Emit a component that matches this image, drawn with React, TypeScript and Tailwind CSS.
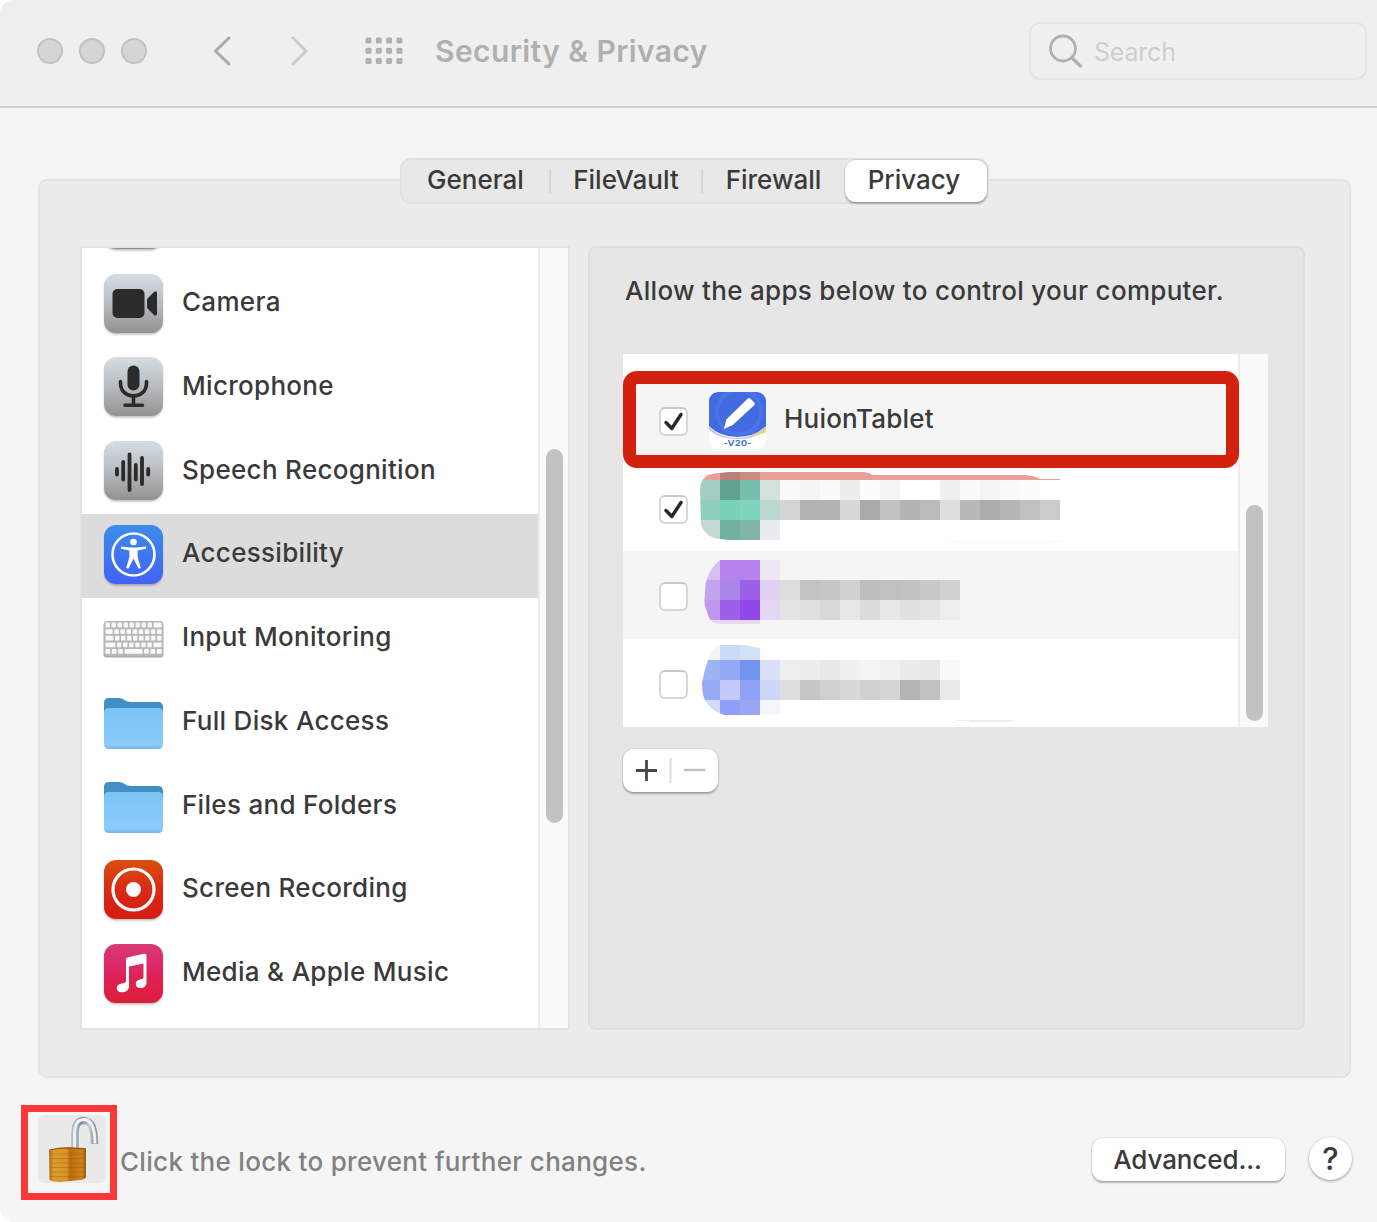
import type { ReactNode } from 'react'

function Tile({ id, from, mid, to, children }: { id: string; from: string; mid?: string; to: string; children?: ReactNode }) {
  return (
    <svg width="67" height="69" viewBox="-4 -4 67 69" className="-m-1 shrink-0">
      <defs>
        <linearGradient id={id} x1="0" y1="0" x2="0" y2="1">
          <stop offset="0" stopColor={from} />
          {mid && <stop offset="0.5" stopColor={mid} />}
          <stop offset="1" stopColor={to} />
        </linearGradient>
      </defs>
      <rect x="-1" y="1" width="61" height="61" rx="13" fill="#000" opacity="0.06" />
      <rect x="0" y="1" width="59" height="59.5" rx="12.5" fill="#000" opacity="0.16" />
      <rect width="59" height="59" rx="12" fill={`url(#${id})`} />
      {children}
    </svg>
  )
}

function GrayTile({ id, children }: { id: string; children?: ReactNode }) {
  return <Tile id={id} from="#d3dee4" mid="#b8bcbf" to="#929292">{children}</Tile>
}

function CameraIcon() {
  return (
    <GrayTile id="camera">
      <rect x="8.5" y="15" width="32" height="29" rx="5" fill="#2b2b2b" />
      <path d="M43 26 Q43 25 44 24 L50 18 Q53 16 53 19.5 V39.5 Q53 42.5 50 41 L44 35 Q43 34 43 33 Z" fill="#2b2b2b" />
    </GrayTile>
  )
}

function MicIcon() {
  return (
    <GrayTile id="mic">
      <rect x="23.5" y="8.5" width="12" height="25" rx="6" fill="#2b2b2b" />
      <path d="M16.5 24.5 V26 C16.5 34 22 38.8 29.5 38.8 C37 38.8 42.5 34 42.5 26 V24.5 M29.5 39 V48 M21 48.3 H38.5" fill="none" stroke="#2b2b2b" strokeWidth="3.6" strokeLinecap="round" />
    </GrayTile>
  )
}

function SpeechIcon() {
  return (
    <GrayTile id="speech">
      <path d="M13 28 V33.5 M19.2 21 V38.5 M25.5 13.5 V49 M31.8 24 V38.5 M38 17 V43 M44.2 28 V33.5" stroke="#2b2b2b" strokeWidth="3.8" strokeLinecap="round" />
    </GrayTile>
  )
}

function AccessibilityIcon() {
  return (
    <Tile id="access" from="#3d8ceb" mid="#3d78f0" to="#4362f4">
      <circle cx="29.5" cy="29.5" r="21" fill="none" stroke="#fff" strokeWidth="2.6" />
      <circle cx="29.5" cy="17" r="3.3" fill="#fff" />
      <path d="M17 21.6 L26.5 22.6 H32.5 L42 21.6 V23.8 L33.6 25.6 V32 L36.8 43 L34.6 43.8 L29.5 33.5 L24.4 43.8 L22.2 43 L25.4 32 V25.6 L17 23.8 Z" fill="#fff" />
    </Tile>
  )
}

const keyRows = [
  [5, 5, 5, 5, 5, 5, 5, 5, 9],
  [8, 5, 5, 5, 5, 5, 5, 5, 5],
  [9, 5, 5, 5, 5, 5, 5, 5, 5],
  [11, 5, 5, 5, 5, 5, 5, 9],
  [5, 5, 5, 19, 5, 5, 5],
]

function KeyboardIcon() {
  return (
    <svg width="61" height="61" viewBox="-1 0 61 61" className="-mx-px shrink-0">
      <rect x="-0.5" y="13" width="60" height="35.5" rx="3" fill="#ababab" />
      <rect x="0" y="12" width="59" height="35" rx="2.5" fill="#b8b8b8" />
      {keyRows.map((keys, r) => {
        const scale = (56 - (keys.length - 1) * 1.6) / keys.reduce((a, b) => a + b, 0)
        let x = 1.5
        return keys.map((k, c) => {
          const left = x
          x += k * scale + 1.6
          return <rect key={`${r}-${c}`} x={left} y={13.6 + r * 6.6} width={k * scale} height="4.8" rx="0.9" fill="#f8f8f8" />
        })
      })}
    </svg>
  )
}

function FolderIcon({ id }: { id: string }) {
  return (
    <svg width="61" height="61" viewBox="-1 0 61 61" className="-mx-px shrink-0">
      <defs>
        <linearGradient id={id} x1="0" y1="0" x2="0" y2="1">
          <stop offset="0" stopColor="#7cc4f4" />
          <stop offset="0.9" stopColor="#8accfc" />
          <stop offset="1" stopColor="#74b4de" />
        </linearGradient>
      </defs>
      <path d="M0 11 Q0 6 5 6 H15 Q18 6 20.5 8 Q23 10 27 10 H54 Q59 10 59 15 V30 H0 Z" fill="#418fc6" />
      <path d="M0 21 Q0 16 5 16 H54 Q59 16 59 21 V52 Q59 57 54 57 H5 Q0 57 0 52 Z" fill={`url(#${id})`} />
    </svg>
  )
}

function RecordingIcon() {
  return (
    <Tile id="record" from="#d9500f" mid="#d92a14" to="#d61c12">
      <circle cx="29.5" cy="29.5" r="20.5" fill="none" stroke="#fff" strokeWidth="3.2" />
      <circle cx="29.5" cy="29.5" r="7.5" fill="#fff" />
    </Tile>
  )
}

function MusicIcon() {
  return (
    <Tile id="music" from="#d63a78" mid="#df235c" to="#dc1c36">
      <path d="M22 15.5 Q22 13.7 24 13.2 L40 9.8 Q42.5 9.4 42.5 11.5 V38 C42.5 42 40 44 36.5 44 C33.5 44 31.8 42.4 31.8 40 C31.8 37 34 35.6 37 35.2 C39 34.9 39.5 34.5 39.5 32.5 V19.5 L25 22.5 V42 C25 46 22 48.3 18 48.3 C15 48.3 12.7 46.8 12.7 44 C12.7 41.2 15 39.8 18 39.4 C21 39 22 38.7 22 36.5 Z" fill="#fff" />
    </Tile>
  )
}

const sections = [
  { label: 'Camera', icon: <CameraIcon /> },
  { label: 'Microphone', icon: <MicIcon /> },
  { label: 'Speech Recognition', icon: <SpeechIcon /> },
  { label: 'Accessibility', icon: <AccessibilityIcon />, selected: true },
  { label: 'Input Monitoring', icon: <KeyboardIcon /> },
  { label: 'Full Disk Access', icon: <FolderIcon id="folder-disk" /> },
  { label: 'Files and Folders', icon: <FolderIcon id="folder-files" /> },
  { label: 'Screen Recording', icon: <RecordingIcon /> },
  { label: 'Media & Apple Music', icon: <MusicIcon /> },
]

type Band = { y: number; h: number; colors: string[] }

const hiddenApps: { checked: boolean; height: string; clip: string; bands: Band[]; extra?: ReactNode }[] = [
  {
    checked: true,
    height: 'h-[87px]',
    clip: 'M0 24 Q1 9 20 9 Q30 7 60 8 H164 Q170 9 172 11 H326 Q336 12 340 15 H360 V76 H60 Q40 78 20 75 Q6 74 1 61 Z',
    bands: [
      { y: 8, h: 8, colors: ['#e8a19a', '#b97f78', '#cb8a82', ...Array(15).fill('#e8a19a')] },
      { y: 16, h: 20, colors: ['#a5ccc1', '#60a291', '#75c0ab', '#d5e2de', '#fafafa', '#f5f5f5', '#fafafa', '#ededed', '#fcfcfc', '#f4f4f4', '#fefefe', '#fefefe', '#f0f0f0', '#fafafa', '#f3f3f3', '#fafafa', '#fcfcfc', '#fefefe'] },
      { y: 36, h: 20, colors: ['#90cfbc', '#7ad1b9', '#80d5be', '#bbd7cf', '#d5d5d5', '#b2b2b2', '#b3b3b3', '#d8d8d8', '#aaaaaa', '#c1c1c1', '#b4b4b4', '#bbbbbb', '#dedede', '#b9b9b9', '#acacac', '#b5b5b5', '#c0c0c0', '#cbcbcb'] },
      { y: 56, h: 20, colors: ['#c4d9d4', '#6fb09f', '#82b5a8', '#e9edef'] },
    ],
    extra: <path d="M241 76 H369 Q360 80 340 80 H270 Q250 80 241 76 Z" fill="#fcfcfc" />,
  },
  {
    checked: false,
    height: 'h-[88px]',
    clip: 'M20 9 H380 V69 H80 V73 H20 Q9 73 7 60 Q3 53 5 44 Q4 22 20 9 Z',
    bands: [
      { y: 9, h: 20, colors: ['#d6bff0', '#b583ee', '#b583ee', '#ede8f5'] },
      { y: 29, h: 20, colors: ['#c3a4ef', '#ab86e9', '#9d60e8', '#e0d0f2', '#dddddd', '#c3c3c3', '#c6c6c6', '#d1d1d1', '#bdbdbd', '#c0c0c0', '#c2c2c2', '#c8c8c8', '#d1d1d1'] },
      { y: 49, h: 20, colors: ['#bd98ed', '#9d60e8', '#9248e9', '#e2d8f3', '#e4e4e4', '#e0e0e0', '#d9d9d9', '#e8e8e8', '#dcdcdc', '#e8e8e8', '#e1e1e1', '#e4e4e4', '#eeeeee'] },
      { y: 69, h: 4, colors: ['#ead8f6', '#e4d8f2', '#e4d8f2'] },
    ],
  },
  {
    checked: false,
    height: 'h-[88px]',
    clip: 'M8 21 Q10 11 20 6 H45 L60 9 H380 V76 H24 Q10 71 5 61 Q2 55 2 44 Q4 32 8 21 Z',
    bands: [
      { y: 1, h: 20, colors: ['#f0f4fb', '#cbdaf8', '#d4dff8'] },
      { y: 21, h: 20, colors: ['#9eb3f4', '#93a9f6', '#7295f3', '#dae0f9', '#eeeeee', '#ededed', '#e8e8e8', '#f0f0f0', '#f4f4f4', '#f1f1f1', '#ebebeb', '#e9e9e9', '#fafafa'] },
      { y: 41, h: 20, colors: ['#97a8f5', '#c2caf9', '#90a2f5', '#cfd7f9', '#dddddd', '#c6c6c6', '#d0d0d0', '#d8d8d8', '#d0d0d0', '#d5d5d5', '#b5b5b5', '#c2c2c2', '#eaeaea'] },
      { y: 61, h: 15, colors: ['#d2d8f9', '#8f9ff6', '#9aa5f4', '#f4f6fc'] },
    ],
    extra: <path d="M252 81 H316 Q312 83 300 83 H278 Q262 82 252 81 Z" fill="#ececec" />,
  },
]

function Mosaic({ id, clip, bands, extra }: { id: string; clip: string; bands: Band[]; extra?: ReactNode }) {
  return (
    <svg width="380" height="87" viewBox="0 0 380 87" shapeRendering="crispEdges" className="ml-3 self-start">
      <clipPath id={id}>
        <path d={clip} />
      </clipPath>
      <g clipPath={`url(#${id})`}>
        {bands.map((band) =>
          band.colors.map((color, i) => (
            <rect key={`${band.y}-${i}`} x={i * 20} y={band.y} width="20" height={band.h} fill={color} />
          )),
        )}
      </g>
      {extra}
    </svg>
  )
}

function Checkbox({ checked }: { checked: boolean }) {
  return (
    <span className="mt-[3px] flex size-[29px] shrink-0 items-center justify-center rounded-[6px] border-2 border-[#d6d6d6] border-t-[#c8c8c8] bg-white">
      {checked && (
        <svg width="23" height="23" viewBox="0 0 23 23">
          <path d="M4 12.5 L9.8 18.5 L19 4.5" fill="none" stroke="#272727" strokeWidth="3.4" strokeLinecap="round" strokeLinejoin="round" />
        </svg>
      )}
    </span>
  )
}

function HuionIcon() {
  return (
    <svg width="57" height="57" viewBox="0 0 57 57" className="ml-[21px]">
      <clipPath id="huion">
        <rect width="57" height="57" rx="9" />
      </clipPath>
      <g clipPath="url(#huion)">
        <rect width="57" height="57" fill="#fff" />
        <path d="M0 34 Q10 46 28 46 Q46 46 57 34 V38 Q44 48 28 47 Q10 47 0 38 Z" fill="#bccbf2" />
        <path d="M44 42 Q52 40 57 35 V40 Q50 44 42 44 Z" fill="#d9d58c" />
        <path d="M0 0 H57 V34 Q46 45 28.5 45 Q11 45 0 34 Z" fill="#426be2" />
        <circle cx="30" cy="20" r="22" fill="none" stroke="#5b84ec" strokeWidth="4" opacity="0.35" />
        <path d="M38.5 6.8 Q40 5.4 41.5 6.8 L45 10.2 Q46.5 11.7 45.2 13.3 L23.8 33 L14.8 37 L17.4 27.5 Z" fill="#fff" />
        <text x="28.5" y="53.5" textAnchor="middle" fontSize="7.5" fontWeight="700" fill="#4b74cf" textLength="28" lengthAdjust="spacingAndGlyphs">-V20-</text>
      </g>
    </svg>
  )
}

function LockIcon() {
  return (
    <svg width="68" height="68" viewBox="0 0 68 68">
      <defs>
        <linearGradient id="brass" x1="0" x2="1">
          <stop offset="0" stopColor="#a96a12" />
          <stop offset="0.12" stopColor="#dc9a2c" />
          <stop offset="0.48" stopColor="#d9942a" />
          <stop offset="0.56" stopColor="#b86f0c" />
          <stop offset="0.9" stopColor="#cc831a" />
          <stop offset="1" stopColor="#8f590f" />
        </linearGradient>
        <linearGradient id="steel" x1="0" x2="1">
          <stop offset="0" stopColor="#b3b9c2" />
          <stop offset="0.35" stopColor="#7f8996" />
          <stop offset="0.7" stopColor="#c9cfd8" />
          <stop offset="1" stopColor="#8e97a5" />
        </linearGradient>
      </defs>
      <rect width="68" height="68" rx="7" fill="#e9e9e9" />
      <path d="M37 34 V19 C37 9 40 5.5 46 5.5 C53 5.5 56.5 12 56.5 29" fill="none" stroke="url(#steel)" strokeWidth="7.4" />
      <path d="M36.6 34 V19 C36.6 9 40 4.5 46 4.5 C53 5 57 12 57 28.5" fill="none" stroke="#eef1f6" strokeWidth="3" />
      <path d="M11 35 Q20 31.5 30 32 L47 33 Q48 33 48 35 V62 Q47 64.5 42 65 L22 67 Q13 66.5 11.5 64.5 Z" fill="url(#brass)" />
      <path d="M12 39 H47 M12 43.5 H47 M12 48 H47 M12 52.5 H47 M12 57 H47 M12 61.5 H47" stroke="#8e5508" strokeWidth="0.9" opacity="0.35" />
      <path d="M11.5 35 Q20 33 30 33 L47.5 34" fill="none" stroke="#8b5a14" strokeWidth="1.2" />
    </svg>
  )
}

const button = 'rounded-[11px] bg-white shadow-[0_0_0_1px_rgba(0,0,0,0.05),0_1.5px_2px_rgba(0,0,0,0.28)]'

export default function App() {
  return (
    <div className="h-[1222px] w-[1377px] overflow-hidden bg-white font-['Inter','Liberation_Sans',sans-serif] text-[26px] text-[#3a3a3a]">
      <div className="flex h-full flex-col overflow-hidden rounded-l-[14px] bg-[#f5f5f5]">
        <header className="flex h-[108px] shrink-0 items-center border-b-2 border-[#d1d1d1] bg-[#efefef] pb-1 pl-[37px] pr-[10px]">
          <div className="flex gap-4">
            {[0, 1, 2].map((i) => (
              <span key={i} className="size-[26px] rounded-full border-2 border-[#c2c2c2] bg-[#d5d5d5]" />
            ))}
          </div>
          <svg width="100" height="34" viewBox="0 0 100 34" fill="none" strokeWidth="3" strokeLinecap="round" strokeLinejoin="round" className="ml-[65px]">
            <path d="M17 4 L3.5 17 L17 30" stroke="#aaaaaa" />
            <path d="M81 4 L94 17 L81 30" stroke="#cbcbcb" />
          </svg>
          <svg width="38" height="28" viewBox="0 0 38 28" fill="#b0b0b0" className="ml-[53px]">
            {[0, 1, 2].map((r) =>
              [0, 1, 2, 3].map((c) => (
                <rect key={`${r}-${c}`} x={0.5 + c * 10.3} y={0.5 + r * 10.3} width="6" height="6" rx="1.5" />
              )),
            )}
          </svg>
          <h1 className="ml-8 whitespace-nowrap text-[30px] font-semibold tracking-[0.4px] text-[#b0b0b0]">Security &amp; Privacy</h1>
          <div className="ml-auto flex h-[58px] w-[338px] items-center rounded-[11px] border-2 border-[#e4e4e4] bg-[#f0f0f0] pl-[17px]">
            <svg width="36" height="36" viewBox="0 0 36 36" fill="none" stroke="#b1b1b1" strokeLinecap="round">
              <circle cx="15" cy="15.5" r="12.5" strokeWidth="2.8" />
              <path d="M24 25 L32.5 33" strokeWidth="3.4" />
            </svg>
            <span className="ml-[10px] mt-1 text-[25px] tracking-[-0.2px] text-[#cecece]">Search</span>
          </div>
        </header>

        <div className="ml-[38px] mr-[26px] mt-[50px] flex flex-col">
          <nav className="relative z-10 -mb-[25px] ml-[362px] flex h-[46px] w-[589px] items-center rounded-[11px] border-2 border-[#e1e1e1] bg-[#e8e8e8] font-medium leading-[36px]">
            <span className="-mt-[3px] w-[147px] text-center">General</span>
            <span className="h-6 w-[2px] bg-[#d6d6d6]" />
            <span className="-mt-[3px] w-[150px] text-center">FileVault</span>
            <span className="h-6 w-[2px] bg-[#d6d6d6]" />
            <span className="-mt-[3px] w-[141px] text-center">Firewall</span>
            <span className={`ml-px flex h-[42px] w-[142px] items-center justify-center pb-[3px] pr-1 ${button}`}>Privacy</span>
          </nav>

          <main className="flex h-[899px] gap-[18px] rounded-[9px] border-2 border-[#e3e3e3] bg-[#ececec] pl-10 pt-[65px]">
            <aside className="flex h-[784px] w-[490px] border-2 border-[#e3e3e3] bg-white">
              <div className="w-[456px] overflow-hidden">
                <div className="h-[15px] overflow-hidden pl-[22px]">
                  <div className="-mt-[62px]">
                    <GrayTile id="previous" />
                  </div>
                </div>
                {sections.map(({ label, icon, selected }) => (
                  <div key={label} className={`flex h-[83.75px] items-start pl-[22px] pt-[10.5px] ${selected ? 'bg-[#dcdcdc]' : ''}`}>
                    {icon}
                    <span className="ml-[19px] mt-[10.5px] whitespace-nowrap font-[450] leading-[36px] tracking-[0.3px]">{label}</span>
                  </div>
                ))}
              </div>
              <div className="flex-1 border-l-2 border-[#ececec] bg-[#fafafa] pl-[6px] pt-[201px]">
                <div className="h-[374px] w-[17px] rounded-full bg-[#c2c2c2]" />
              </div>
            </aside>

            <section className="h-[784px] w-[717px] rounded-[8px] border-2 border-[#dedede] bg-[#e6e6e6] pl-[33px] pt-[25px]">
              <p className="ml-[2px] whitespace-nowrap font-[450] leading-[36px] tracking-[0.3px]">Allow the apps below to control your computer.</p>
              <div className="relative mt-[45px] flex h-[373px] w-[645px] bg-white">
                <div className="w-[615px] pt-[22px]">
                  <div className="flex h-[88px] items-center bg-[#f5f5f5] pl-9">
                    <Checkbox checked />
                    <HuionIcon />
                    <span className="-mt-[2px] ml-[18px] font-[450] leading-[36px] tracking-[0.2px]">HuionTablet</span>
                  </div>
                  {hiddenApps.map(({ checked, height, ...mosaic }, i) => (
                    <div key={i} className={`flex items-center pl-9 ${height} ${i === 1 ? 'bg-[#f5f5f5]' : ''}`}>
                      <Checkbox checked={checked} />
                      <Mosaic id={`hidden-${i}`} {...mosaic} />
                    </div>
                  ))}
                </div>
                <div className="flex-1 border-l-2 border-[#ececec] bg-[#fafafa] pl-[6px] pt-[151px]">
                  <div className="h-[216px] w-[17px] rounded-full bg-[#c2c2c2]" />
                </div>
                <div className="absolute left-0 top-[17px] h-[97px] w-[616px] rounded-[14px] border-[13px] border-[#d32110]" />
              </div>
              <div className={`mt-[22px] flex h-[43px] w-[95px] items-center ${button}`}>
                <svg width="95" height="43" viewBox="0 0 95 43" fill="none" strokeWidth="2.8">
                  <path d="M13 21.5 H34 M23.5 11 V32" stroke="#484848" />
                  <path d="M47.5 9 V34" stroke="#dddddd" strokeWidth="2" />
                  <path d="M61 21 H82.5" stroke="#c0c0c0" strokeWidth="2.4" />
                </svg>
              </div>
            </section>
          </main>
        </div>

        <footer className="mt-[27px] flex items-start pl-[21px]">
          <div className="flex h-[95px] w-24 shrink-0 items-start border-[7px] border-[#fd3838] pl-[10px] pt-[3px]">
            <LockIcon />
          </div>
          <span className="ml-[3px] mt-[39px] whitespace-nowrap font-[450] leading-[36px] tracking-[0.3px] text-[#818181]">Click the lock to prevent further changes.</span>
          <div className={`ml-auto mt-[33px] flex h-[43px] w-[193px] items-center justify-center pr-[2px] font-medium tracking-[-0.1px] ${button}`}>Advanced...</div>
          <div className="ml-6 mr-[25px] mt-8 flex size-[43px] items-center justify-center rounded-full bg-white pt-px text-[31px] font-medium shadow-[0_0_0_1px_rgba(0,0,0,0.05),0_1.5px_3px_rgba(0,0,0,0.28)]">?</div>
        </footer>
      </div>
    </div>
  )
}
